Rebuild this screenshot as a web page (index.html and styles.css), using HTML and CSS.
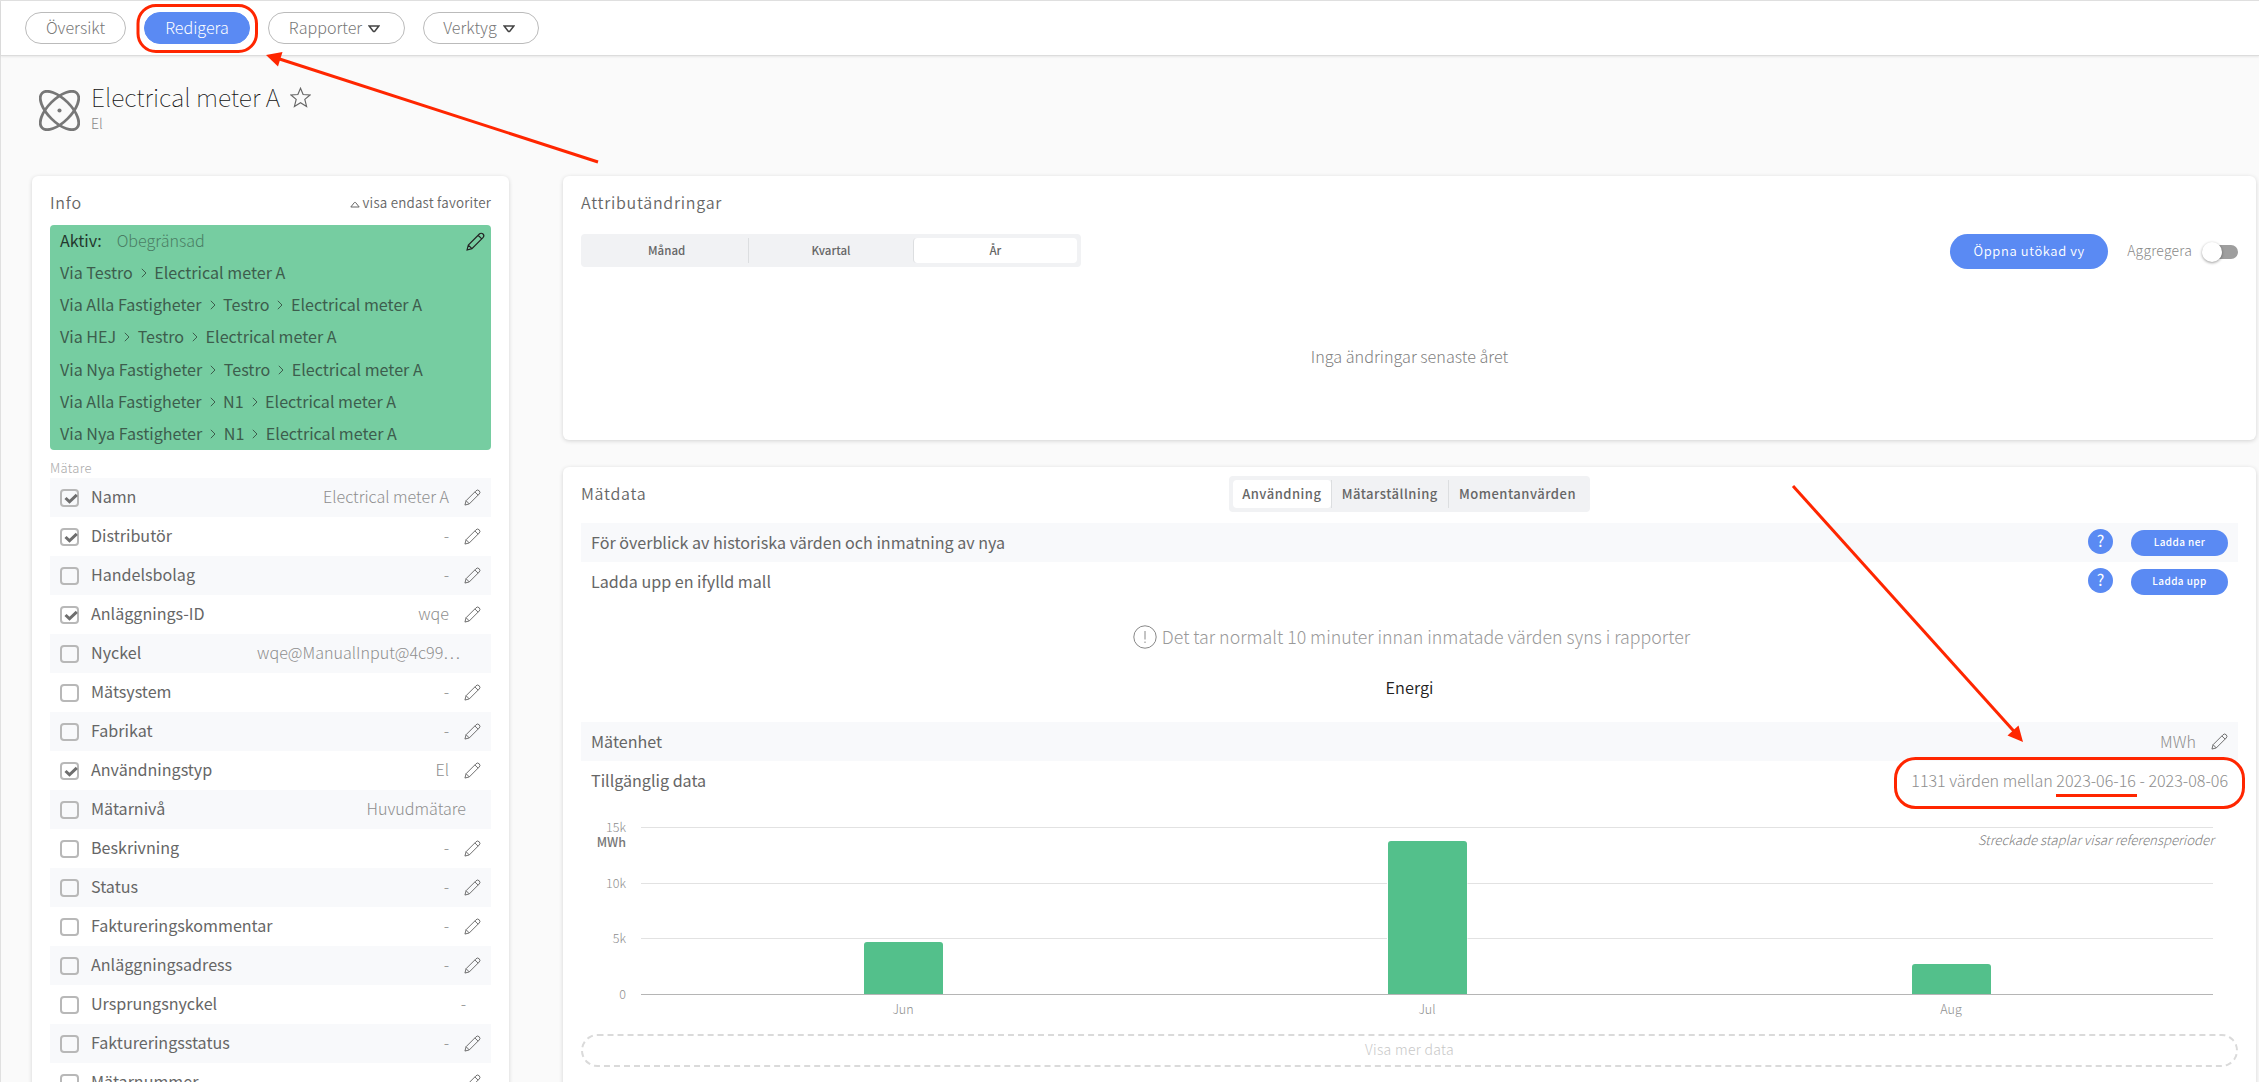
FILE: index.html
```
<!DOCTYPE html>
<html lang="sv">

<head>
    <meta charset="UTF-8">
    <meta name="viewport" content="width=device-width, initial-scale=1.0">
    <title>Electrical meter A</title>
    <link rel="stylesheet" href="styles.css">
</head>

<body>
    <svg class="defs">
        <symbol id="pencil" viewBox="0 0 18 18">
            <path d="M1 17l1.200-4.600L12.700 1.900a2.300 2.300 0 0 1 3.400 3.400L5.600 15.800zM11.500 3.100l3.400 3.400M2.200 12.400l3.400 3.400" />
        </symbol>
        <symbol id="arrow" viewBox="0 0 6 10">
            <path d="M.8.8L5 5 .8 9.2" />
        </symbol>
        <symbol id="check" viewBox="0 0 14 11">
            <path d="M1.500 5l4 3.800L12.800 1.800" />
        </symbol>
        <symbol id="down" viewBox="0 0 12 8">
            <path d="M1.200 1h9.600L6.800 6.200q-.8.8-1.600 0z" />
        </symbol>
    </svg>

    <div class="page">
        <nav class="topbar">
            <a class="tab tab-oversikt">Översikt</a>
            <a class="tab tab-redigera active">Redigera</a>
            <a class="tab tab-rapporter">Rapporter <svg class="down"><use href="#down" /></svg></a>
            <a class="tab tab-verktyg">Verktyg <svg class="down"><use href="#down" /></svg></a>
        </nav>

        <header class="heading">
            <svg class="atom" viewBox="0 0 40 40">
                <ellipse cx="20" cy="20" rx="24" ry="11.200" transform="rotate(45 20 20)" />
                <ellipse cx="20" cy="20" rx="24" ry="11.200" transform="rotate(-45 20 20)" />
                <circle cx="20" cy="20" r="2" />
            </svg>
            <div>
                <h1>Electrical meter A
                    <svg class="star" viewBox="0 0 20 20">
                        <path d="M10 1.200l2.500 6 6.600.4-5 4.200 1.700 6.700L10 15l-5.800 3.500 1.700-6.700-5-4.200 6.600-.4z" />
                    </svg>
                </h1>
                <div class="sub">El</div>
            </div>
        </header>

        <main class="columns">
            <section class="card info">
                <div class="card-head">
                    <h2>Info</h2>
                    <span class="fav"><svg class="up" viewBox="0 0 10 7"><path d="M.8 6h8.400L5.600 1.500q-.6-.6-1.200 0z" /></svg>visa endast favoriter</span>
                </div>
                <div class="paths">
                    <div class="path"><b>Aktiv:</b><i>Obegränsad</i><svg class="pencil"><use href="#pencil" /></svg></div>
                    <div class="path">Via Testro<svg class="arrow"><use href="#arrow" /></svg>Electrical meter A</div>
                    <div class="path">Via Alla Fastigheter<svg class="arrow"><use href="#arrow" /></svg>Testro<svg class="arrow"><use href="#arrow" /></svg>Electrical meter A</div>
                    <div class="path">Via HEJ<svg class="arrow"><use href="#arrow" /></svg>Testro<svg class="arrow"><use href="#arrow" /></svg>Electrical meter A</div>
                    <div class="path">Via Nya Fastigheter<svg class="arrow"><use href="#arrow" /></svg>Testro<svg class="arrow"><use href="#arrow" /></svg>Electrical meter A</div>
                    <div class="path">Via Alla Fastigheter<svg class="arrow"><use href="#arrow" /></svg>N1<svg class="arrow"><use href="#arrow" /></svg>Electrical meter A</div>
                    <div class="path">Via Nya Fastigheter<svg class="arrow"><use href="#arrow" /></svg>N1<svg class="arrow"><use href="#arrow" /></svg>Electrical meter A</div>
                </div>
                <div class="group">Mätare</div>
                <div class="rows">
                    <div class="row"><span class="box"><svg><use href="#check" /></svg></span>Namn<span class="value">Electrical meter A</span><svg class="pencil"><use href="#pencil" /></svg></div>
                    <div class="row"><span class="box"><svg><use href="#check" /></svg></span>Distributör<span class="value">-</span><svg class="pencil"><use href="#pencil" /></svg></div>
                    <div class="row"><span class="box"></span>Handelsbolag<span class="value">-</span><svg class="pencil"><use href="#pencil" /></svg></div>
                    <div class="row"><span class="box"><svg><use href="#check" /></svg></span>Anläggnings-ID<span class="value">wqe</span><svg class="pencil"><use href="#pencil" /></svg></div>
                    <div class="row locked long"><span class="box"></span>Nyckel<span class="value">wqe@ManualInput@4c99…</span></div>
                    <div class="row"><span class="box"></span>Mätsystem<span class="value">-</span><svg class="pencil"><use href="#pencil" /></svg></div>
                    <div class="row"><span class="box"></span>Fabrikat<span class="value">-</span><svg class="pencil"><use href="#pencil" /></svg></div>
                    <div class="row"><span class="box"><svg><use href="#check" /></svg></span>Användningstyp<span class="value">El</span><svg class="pencil"><use href="#pencil" /></svg></div>
                    <div class="row locked"><span class="box"></span>Mätarnivå<span class="value">Huvudmätare</span></div>
                    <div class="row"><span class="box"></span>Beskrivning<span class="value">-</span><svg class="pencil"><use href="#pencil" /></svg></div>
                    <div class="row"><span class="box"></span>Status<span class="value">-</span><svg class="pencil"><use href="#pencil" /></svg></div>
                    <div class="row"><span class="box"></span>Faktureringskommentar<span class="value">-</span><svg class="pencil"><use href="#pencil" /></svg></div>
                    <div class="row"><span class="box"></span>Anläggningsadress<span class="value">-</span><svg class="pencil"><use href="#pencil" /></svg></div>
                    <div class="row locked"><span class="box"></span>Ursprungsnyckel<span class="value">-</span></div>
                    <div class="row"><span class="box"></span>Faktureringsstatus<span class="value">-</span><svg class="pencil"><use href="#pencil" /></svg></div>
                    <div class="row"><span class="box"></span>Mätarnummer<span class="value"></span><svg class="pencil"><use href="#pencil" /></svg></div>
                </div>
            </section>

            <div class="right">
                <section class="card changes">
                    <h2>Attributändringar</h2>
                    <div class="toolbar">
                        <div class="seg period">
                            <span>Månad</span>
                            <span>Kvartal</span>
                            <span class="on">År</span>
                        </div>
                        <a class="btn">Öppna utökad vy</a>
                        <span class="agg">Aggregera</span>
                        <span class="switch"></span>
                    </div>
                    <p class="empty">Inga ändringar senaste året</p>
                </section>

                <section class="card data">
                    <div class="data-head">
                        <h2>Mätdata</h2>
                        <div class="seg kind">
                            <span class="on">Användning</span>
                            <span>Mätarställning</span>
                            <span>Momentanvärden</span>
                        </div>
                    </div>
                    <div class="row shaded">För överblick av historiska värden och inmatning av nya<span class="help">?</span><a class="btn small">Ladda ner</a></div>
                    <div class="row">Ladda upp en ifylld mall<span class="help">?</span><a class="btn small">Ladda upp</a></div>
                    <p class="notice">
                        <svg class="bang" viewBox="0 0 24 24">
                            <circle cx="12" cy="12" r="11.200" />
                            <path d="M12 6v8.500M12 16.500v1.500" />
                        </svg>
                        Det tar normalt 10 minuter innan inmatade värden syns i rapporter
                    </p>
                    <h3>Energi</h3>
                    <div class="row shaded">Mätenhet<span class="value">MWh</span><svg class="pencil"><use href="#pencil" /></svg></div>
                    <div class="row">Tillgänglig data<span class="value">1131 värden mellan 2023-06-16 - 2023-08-06</span></div>

                    <div class="chart">
                        <div class="axis">
                            <span>15k<b>MWh</b></span>
                            <span>10k</span>
                            <span>5k</span>
                            <span>0</span>
                        </div>
                        <div class="plot">
                            <div class="bars">
                                <div class="bar" style="height: 52px"></div>
                                <div class="bar" style="height: 153px"></div>
                                <div class="bar" style="height: 30px"></div>
                            </div>
                            <div class="months">
                                <span>Jun</span>
                                <span>Jul</span>
                                <span>Aug</span>
                            </div>
                            <em class="legend">Streckade staplar visar referensperioder</em>
                        </div>
                    </div>
                    <a class="more">Visa mer data</a>
                </section>
            </div>
        </main>
    </div>

    <!-- markeringar ovanpå sidan -->
    <svg class="marks" viewBox="0 0 2259 1082">
        <rect x="138" y="5.500" width="118.500" height="46" rx="18" />
        <path d="M598 162L278 58.500" />
        <path class="tip" d="M266 55l16.500-3-4.500 14.500z" />
        <path d="M1793 486l223 247.500" />
        <path class="tip" d="M2023 742l-15.500-6.500 11-10z" />
        <rect x="1895.500" y="758.500" width="348" height="49" rx="20" />
        <path d="M2056 795.500h81" />
    </svg>
</body>

</html>
```
FILE: styles.css
```
* {
    box-sizing: border-box;
}

body {
    margin: 0;
    height: 1082px;
    overflow: hidden;
    position: relative;
    background: #fafafa;
    color: #666;
    font-family: "Noto Sans CJK SC", "Noto Sans", sans-serif;
    font-size: 16.1px;
}

h1,
h2,
h3,
p {
    margin: 0;
    font-weight: 300;
}

svg {
    flex: none;
    fill: none;
    stroke: #666;
}

.defs {
    position: absolute;
    width: 0;
    height: 0;
}

.page {
    height: 1082px;
    border-left: 1px solid #e0e0e0;
    border-top: 1px solid #e0e0e0;
}

/* topbar */
.topbar {
    display: flex;
    gap: 18px;
    height: 55px;
    padding: 11px 24px 0;
    background: #fff;
    border-bottom: 1px solid #dcdcdc;
    box-shadow: 0 1px 2px rgba(0, 0, 0, .08);
}

.tab {
    display: flex;
    align-items: center;
    justify-content: center;
    height: 32px;
    padding-bottom: 3px;
    border: 1px solid #bbb;
    border-radius: 16px;
    color: #777;
    font-weight: 300;
}

.tab-oversikt {
    width: 101px;
}

.tab-redigera {
    width: 106px;
}

.tab-rapporter {
    width: 137px;
}

.tab-verktyg {
    width: 116px;
}

.tab-rapporter,
.tab-verktyg {
    padding-right: 4px;
}

.tab.active {
    background: #5a8af3;
    border-color: #5a8af3;
    color: #fff;
}

.down {
    width: 12px;
    height: 8px;
    margin: 4px 0 0 6px;
    stroke: #444;
    stroke-width: 1.5;
}

/* heading */
.heading {
    display: flex;
    height: 120px;
    padding: 34px 0 0 38px;
}

.atom {
    width: 41px;
    height: 41px;
    margin-right: 11px;
    stroke: #777;
    stroke-width: 2.7;
}

.atom circle {
    fill: #777;
    stroke: none;
}

h1 {
    display: flex;
    align-items: center;
    height: 36px;
    margin-top: -12px;
    color: #111;
    font-size: 24.800px;
    font-weight: 100;
    line-height: 36px;
}

.star {
    width: 21px;
    height: 21px;
    margin: 3px 0 0 10px;
    stroke-width: 1.1;
}

.sub {
    color: #888;
    font-size: 14px;
    font-weight: 300;
    line-height: 18px;
}

/* cards */
.columns {
    display: flex;
    align-items: flex-start;
    padding: 0 3px 0 31px;
}

.card {
    background: #fff;
    border-radius: 6px;
    box-shadow: 0 1px 4px rgba(0, 0, 0, .16);
}

h2 {
    font-size: 16px;
    font-weight: 350;
    letter-spacing: .75px;
    line-height: 25px;
}

.info {
    width: 477px;
    height: 960px;
    margin-right: 54px;
    padding: 14px 18px 0;
}

.card-head {
    display: flex;
    justify-content: space-between;
    height: 35px;
}

.fav {
    font-size: 13.400px;
    font-weight: 350;
    letter-spacing: .2px;
    line-height: 25px;
}

.up {
    width: 10px;
    height: 7px;
    margin-right: 3px;
}

.paths {
    height: 225px;
    padding-left: 10px;
    background: #76cda1;
    border-radius: 4px;
    color: #3d5d4d;
}

.path {
    display: flex;
    align-items: center;
    height: 32.150px;
    padding-bottom: 2px;
}

.path b {
    color: #24382e;
    font-weight: 400;
}

.path i {
    margin-left: 15px;
    color: #4a7d64;
    font-style: normal;
    font-weight: 300;
}

.arrow {
    width: 6px;
    height: 10px;
    margin: 2px 7.500px 0 8px;
    stroke: #3d5d4d;
}

.pencil {
    width: 17px;
    height: 17px;
    stroke-width: 1;
}

.path .pencil {
    width: 19px;
    height: 19px;
    margin: 2px 6px 0 auto;
    stroke: #222;
    stroke-width: 1.1;
}

.group {
    height: 28px;
    padding-top: 6px;
    color: #aaa;
    font-size: 13px;
    font-weight: 300;
    letter-spacing: .3px;
    line-height: 24px;
}

.row {
    display: flex;
    align-items: center;
    height: 39px;
    padding: 0 10px 3px;
}

.rows .row:nth-child(odd),
.shaded {
    background: #f8f9fb;
}

.box {
    width: 19px;
    height: 18px;
    margin: 4px 12px 0 0;
    border: 2px solid #b8b8b8;
    border-radius: 4px;
}

.box svg {
    display: block;
    width: 14px;
    height: 11px;
    margin: 2px 0 0 2px;
    stroke: #6e6e6e;
    stroke-width: 3;
}

.value {
    margin-left: auto;
    color: #8e8e8e;
    font-weight: 300;
}

.row .pencil {
    margin: 2px 0 0 15px;
}

.locked {
    padding-right: 25px;
}

.long {
    padding-right: 31px;
}

/* attributändringar */
.right {
    flex: 1;
}

.changes {
    height: 264px;
    margin-bottom: 27px;
    padding: 14px 18px 0;
}

.toolbar {
    display: flex;
    align-items: center;
    height: 37px;
    margin-top: 18px;
}

.seg {
    display: flex;
    padding: 4px;
    background: #f1f2f4;
    border-radius: 4px;
    font-weight: 500;
}

.seg span {
    display: flex;
    align-items: center;
    justify-content: center;
    border-left: 1px solid #dcdee0;
}

.seg span:first-child {
    border-left: 0;
}

.seg .on {
    background: #fff;
    border-radius: 4px;
}

.period {
    width: 500px;
    height: 33px;
    margin: 0 auto 3px 0;
    font-size: 11.500px;
}

.period span {
    flex: 1;
}

.btn {
    width: 158px;
    height: 35px;
    border-radius: 18px;
    background: #5a8af3;
    color: #fff;
    font-size: 13px;
    font-weight: 350;
    letter-spacing: .6px;
    line-height: 34px;
    text-align: center;
}

.agg {
    margin: 0 10px 3px 19px;
    color: #888;
    font-size: 14px;
    font-weight: 300;
    letter-spacing: .2px;
}

.switch {
    position: relative;
    width: 32px;
    height: 14px;
    margin-left: 4px;
    border-radius: 7px;
    background: #9e9e9e;
}

.switch::before {
    content: "";
    position: absolute;
    left: -4px;
    top: -3px;
    width: 20px;
    height: 20px;
    border-radius: 50%;
    background: #fff;
    box-shadow: 0 1px 3px rgba(0, 0, 0, .4);
}

.empty {
    margin-top: 74px;
    color: #808080;
    font-size: 16.200px;
    line-height: 24px;
    text-align: center;
}

/* mätdata */
.data {
    height: 640px;
    padding: 9px 18px 0;
}

.data-head {
    display: grid;
    grid-template-columns: 1fr auto 1fr;
    height: 47px;
}

.data-head h2 {
    padding-top: 5px;
}

.kind {
    width: 361px;
    height: 36px;
    font-size: 13px;
    letter-spacing: .5px;
}

.kind span {
    flex: 118 0 0;
    padding-bottom: 1px;
}

.kind span:first-child {
    flex-grow: 99;
}

.kind span:last-child {
    flex-grow: 139;
}

.data .row {
    padding-bottom: 2px;
}

.help {
    width: 25px;
    height: 25px;
    margin: 0 0 1px auto;
    border-radius: 50%;
    background: #5a8af3;
    color: #fff;
    line-height: 23px;
    text-align: center;
}

.btn.small {
    width: 97px;
    height: 26px;
    margin: 2px 0 0 18px;
    font-size: 10px;
    font-weight: 500;
    letter-spacing: .4px;
    line-height: 24px;
}

.notice {
    display: flex;
    align-items: center;
    justify-content: center;
    height: 72px;
    padding: 0 0 2px 4px;
    color: #999;
    font-size: 17.750px;
}

.bang {
    width: 24px;
    height: 24px;
    margin: 2px 5px 0 0;
    stroke: #888;
}

h3 {
    height: 49px;
    color: #222;
    font-size: 16.300px;
    font-weight: 350;
    line-height: 29px;
    text-align: center;
}

.chart {
    display: flex;
    height: 234px;
    padding: 27px 25px 0 0;
}

.axis {
    width: 60px;
    margin-top: -8px;
    padding-right: 15px;
    color: #8e8e8e;
    font-size: 12.500px;
    font-weight: 300;
    text-align: right;
}

.axis span {
    display: block;
    height: 55.700px;
    line-height: 15px;
}

.axis b {
    display: block;
    color: #777;
    font-weight: 500;
}

.plot {
    flex: 1;
    position: relative;
}

.bars {
    display: flex;
    align-items: flex-end;
    justify-content: space-around;
    height: 168px;
    border-bottom: 1px solid #b5b5b5;
    background:
        linear-gradient(#e2e2e2, #e2e2e2) 0 0 / 100% 1px no-repeat,
        linear-gradient(#e2e2e2, #e2e2e2) 0 56px / 100% 1px no-repeat,
        linear-gradient(#e2e2e2, #e2e2e2) 0 111px / 100% 1px no-repeat;
}

.bar {
    width: 79px;
    border-radius: 3px 3px 0 0;
    background: #53c08b;
    box-shadow: 0 0 0 1px #fff;
    clip-path: inset(-1px -1px 0);
}

.months {
    display: flex;
    color: #8e8e8e;
    font-size: 12.500px;
    font-weight: 300;
    line-height: 28px;
}

.months span {
    flex: 1;
    text-align: center;
}

.legend {
    position: absolute;
    top: 3px;
    right: -1px;
    color: #808080;
    font-size: 13.250px;
    font-weight: 300;
    line-height: 20px;
}

.more {
    display: block;
    height: 33px;
    border: 2px dashed #dadada;
    border-radius: 17px;
    color: #c8c8c8;
    font-size: 14px;
    font-weight: 300;
    letter-spacing: .3px;
    line-height: 27px;
    text-align: center;
}

.marks {
    position: absolute;
    left: 0;
    top: 0;
    width: 2259px;
    height: 1082px;
    stroke: #ff2600;
    stroke-width: 3;
    pointer-events: none;
}

.marks .tip {
    fill: #ff2600;
    stroke: none;
}
```
